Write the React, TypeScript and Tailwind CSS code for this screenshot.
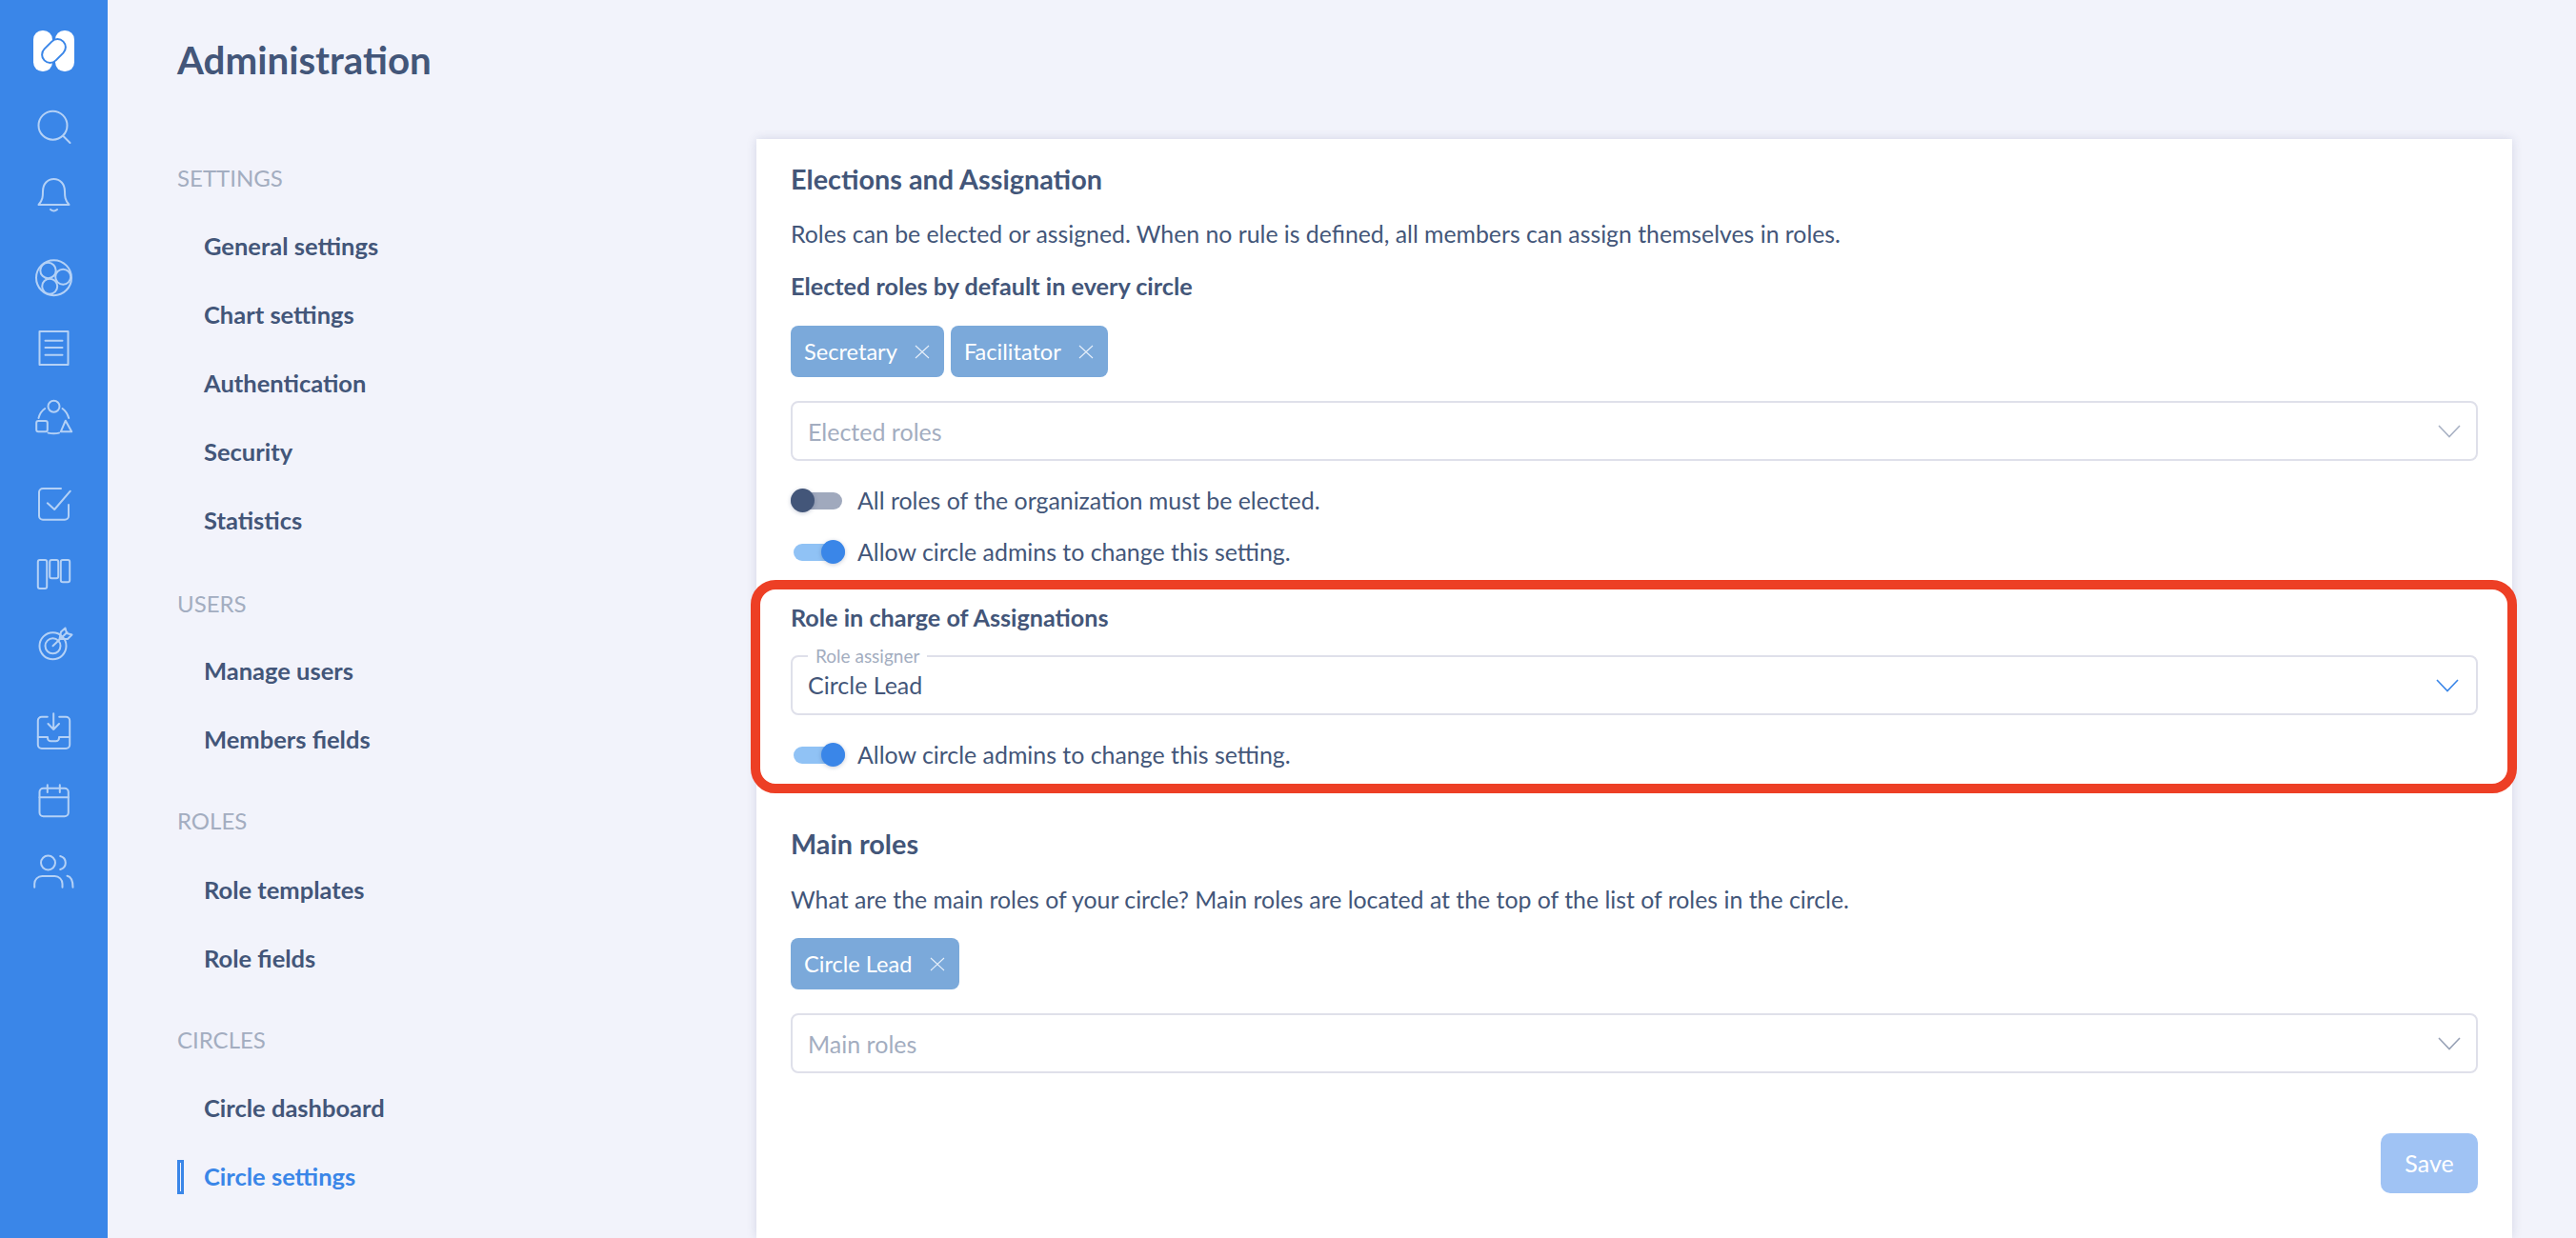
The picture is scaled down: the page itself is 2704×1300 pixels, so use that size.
import type { ReactNode } from "react";

const Icon = ({ children }: { children: ReactNode }) => (
  <svg width="44" height="44" viewBox="0 0 44 44" fill="none" stroke="#b4d1f6" strokeWidth="2" strokeLinecap="round" strokeLinejoin="round">
    {children}
  </svg>
);

const SideSlot = ({ children, className = "" }: { children: ReactNode; className?: string }) => (
  <div className={`h-[73px] flex items-center justify-center ${className}`}>
    <Icon>{children}</Icon>
  </div>
);

const Sidebar = () => (
  <aside className="w-[113px] shrink-0 bg-[#3a86e8] flex flex-col items-stretch">
    <div className="h-[96px] flex items-start justify-center pt-[32px]">
      <svg width="43" height="43" viewBox="0 0 43 43">
        <rect x="0" y="0" width="20" height="43" rx="9.5" fill="#fff" />
        <rect x="23" y="0" width="20" height="43" rx="9.5" fill="#fff" />
        <rect x="7.5" y="13" width="28" height="17" rx="8.5" transform="rotate(-45 21.5 21.5)" fill="#fff" stroke="#3a86e8" strokeWidth="2" />
      </svg>
    </div>
    <SideSlot>
      <circle cx="20.5" cy="20.7" r="15" />
      <path d="M31.5 32L38.5 39" />
    </SideSlot>
    <SideSlot>
      <path d="M5.5 31H37.5C33 26 33 22 33 17C33 9 28 4 21.5 4C15 4 10 9 10 17C10 22 10 26 5.5 31Z" />
      <path d="M18 36Q21.5 39 25 36" />
    </SideSlot>
    <SideSlot className="mt-[13px]">
      <circle cx="21.5" cy="21.7" r="18.5" />
      <circle cx="15.5" cy="14" r="8.2" />
      <circle cx="31.2" cy="20.7" r="8" />
      <circle cx="17.2" cy="30.7" r="8" />
    </SideSlot>
    <SideSlot>
      <rect x="6.5" y="5" width="30" height="35" />
      <path d="M12.5 14.7H30.5M12.5 22H30.5M12.5 29.7H30.5" />
    </SideSlot>
    <SideSlot>
      <circle cx="21.5" cy="10.7" r="6" />
      <rect x="3.2" y="26" width="11.6" height="11.3" rx="2" />
      <path d="M33.8 25.7L40.2 37.3H28.8Z" />
      <path d="M5.5 23C6.5 19 8.5 15.5 12.2 13M30.5 13C34 15.5 36 19 37.2 23M15.5 38.6Q21.5 40 27 38.6" />
    </SideSlot>
    <SideSlot className="mt-[19px]">
      <path d="M29 5H10A4 4 0 0 0 6 9V33.7A4 4 0 0 0 10 37.7H33A4 4 0 0 0 37 33.7V22" />
      <path d="M14.8 20.3L22.2 27L38.8 7.7" />
    </SideSlot>
    <SideSlot>
      <rect x="4.8" y="7" width="9.4" height="30" rx="2" />
      <rect x="17.2" y="7" width="9" height="19.3" rx="2" />
      <rect x="28.8" y="7" width="9.4" height="23.3" rx="2" />
    </SideSlot>
    <SideSlot>
      <circle cx="20.5" cy="24.3" r="14" />
      <circle cx="20.5" cy="24.3" r="8" />
      <path d="M20.5 24.3L35.5 10" />
      <path d="M27.5 17L29 9.5L33.5 5.5L35 11L40.5 12.5L36 17Z" />
    </SideSlot>
    <SideSlot className="mt-[19px]">
      <path d="M14.8 6.7H8.8A4 4 0 0 0 4.8 10.7V36A4 4 0 0 0 8.8 40H34.2A4 4 0 0 0 38.2 36V10.7A4 4 0 0 0 34.2 6.7H27.2" />
      <path d="M21.2 3.3V20M15.5 14L21.2 20L27 14" />
      <path d="M4.8 28H15V29A3.3 3.3 0 0 0 18.3 32.3H23.7A3.3 3.3 0 0 0 27 29V28H38.2" />
    </SideSlot>
    <SideSlot>
      <rect x="6.5" y="8.7" width="30.3" height="29.6" rx="4" />
      <path d="M6.5 18.3H36.8M14.8 5.3V13M27.8 5.3V13" />
    </SideSlot>
    <SideSlot className="pt-[3px]">
      <circle cx="15.5" cy="13" r="7.5" />
      <path d="M1.2 38.7V35A8 8 0 0 1 9.2 27H22.5A8 8 0 0 1 30.5 35V38.7" />
      <path d="M28.2 6Q33.8 7.5 33.8 13Q33.8 18.5 28.2 20" />
      <path d="M35.5 26.7Q41.5 28 41.5 38.7" />
    </SideSlot>
  </aside>
);

const NavGroup = ({ title, items, className = "", listClass = "mt-[35px]", active }: { title: string; items: string[]; className?: string; listClass?: string; active?: string }) => (
  <div className={className}>
    <div className="h-[36px] leading-[36px] text-[24px] text-[#a3adc0]">{title}</div>
    <div className={`flex flex-col ${listClass}`}>
      {items.map((item) => (
        <div key={item} className="relative h-[72px] pl-[28px]">
          {item === active && (
            <span className="absolute left-0 top-[1px] w-[7px] h-[36px] border-[3px] border-[#3a86e8] bg-[#f2f3fb]" />
          )}
          <span className={`block h-[36px] leading-[36px] text-[25.5px] font-bold ${item === active ? "text-[#3a86e8]" : "text-[#435679]"}`}>{item}</span>
        </div>
      ))}
    </div>
  </div>
);

const LeftNav = () => (
  <nav className="w-[608px] shrink-0 pt-[23px] flex flex-col">
    <NavGroup title="SETTINGS" items={["General settings", "Chart settings", "Authentication", "Security", "Statistics"]} />
    <NavGroup className="mt-[16px]" listClass="mt-[34px]" title="USERS" items={["Manage users", "Members fields"]} />
    <NavGroup className="mt-[14px]" listClass="mt-[36px]" title="ROLES" items={["Role templates", "Role fields"]} />
    <NavGroup className="mt-[14px]" title="CIRCLES" items={["Circle dashboard", "Circle settings"]} active="Circle settings" />
  </nav>
);

const Chevron = ({ color, className = "" }: { color: string; className?: string }) => (
  <svg width="24" height="14" viewBox="0 0 24 14" fill="none" className={className}>
    <path d="M1 1L12 12.5L23 1" stroke={color} strokeWidth="1.6" />
  </svg>
);

const Chip = ({ label, className = "" }: { label: string; className?: string }) => (
  <div className={`h-[54px] rounded-[8px] bg-[#7ba9da] pl-[14px] pr-[15px] flex items-center gap-[18px] text-white text-[23.6px] ${className}`}>
    <span className="pt-[1px]">{label}</span>
    <svg width="16" height="15" viewBox="0 0 16 15" fill="none">
      <path d="M1 1L15 14M15 1L1 14" stroke="#e8f0fa" strokeWidth="1.1" />
    </svg>
  </div>
);

const SelectBox = ({ placeholder, chevron }: { placeholder: string; chevron: string }) => (
  <div className="h-[63px] rounded-[8px] border-2 border-[#dfe0ea] pl-[16px] pr-[16px] flex items-center justify-between">
    <span className="pt-[3px] text-[25px] text-[#a3adc0]">{placeholder}</span>
    <Chevron color={chevron} />
  </div>
);

const Toggle = ({ on, label, className = "" }: { on?: boolean; label: string; className?: string }) => (
  <div className={`h-[36px] flex items-center ${className}`}>
    <div className="relative w-[57px] h-[25px] shrink-0 mr-[13px]">
      {on ? (
        <>
          <span className="absolute left-[3px] right-0 top-[4px] h-[18px] rounded-full bg-[#90c2f5]" />
          <span className="absolute right-0 top-0 w-[25px] h-[25px] rounded-full bg-[#3a86e8] shadow-[0_1px_4px_rgba(30,50,100,0.25)]" />
        </>
      ) : (
        <>
          <span className="absolute left-0 right-[3px] top-[4px] h-[18px] rounded-full bg-[#a0a9bd]" />
          <span className="absolute left-0 top-0 w-[25px] h-[25px] rounded-full bg-[#435679] shadow-[0_1px_4px_rgba(30,50,100,0.25)]" />
        </>
      )}
    </div>
    <span className="pt-[1px] text-[24.9px] text-[#435679]">{label}</span>
  </div>
);

const Card = () => (
  <section className="relative w-[1843px] h-[1154px] bg-white shadow-[0_0_10px_rgba(50,60,120,0.16)] pl-[36px] pr-[36px] pt-[24px] text-[#435679]">
    <h2 className="h-[36px] leading-[36px] text-[28.8px] font-bold">Elections and Assignation</h2>
    <p className="mt-[22px] h-[36px] leading-[36px] text-[24.8px]">Roles can be elected or assigned. When no rule is defined, all members can assign themselves in roles.</p>
    <h3 className="mt-[18px] h-[36px] leading-[36px] text-[25.2px] font-bold">Elected roles by default in every circle</h3>
    <div className="mt-[24px] flex gap-[7px]">
      <Chip label="Secretary" />
      <Chip label="Facilitator" />
    </div>
    <div className="mt-[25px]">
      <SelectBox placeholder="Elected roles" chevron="#a9b2c4" />
    </div>
    <Toggle className="mt-[23px]" label="All roles of the organization must be elected." />
    <Toggle className="mt-[18px]" on label="Allow circle admins to change this setting." />

    <h3 className="mt-[33px] h-[36px] leading-[36px] text-[25.2px] font-bold">Role in charge of Assignations</h3>
    <div className="relative mt-[22px] h-[63px] rounded-[8px] border-2 border-[#dfe0ea] pl-[16px] pr-[18px] flex items-center justify-between">
      <span className="absolute left-[16px] -top-[12px] bg-white px-[8px] text-[19px] leading-[22px] text-[#a3adc0]">Role assigner</span>
      <span className="text-[25px] text-[#435679]">Circle Lead</span>
      <Chevron color="#3a86e8" />
    </div>
    <Toggle className="mt-[23px]" on label="Allow circle admins to change this setting." />

    <h2 className="mt-[58px] h-[36px] leading-[36px] text-[28.8px] font-bold">Main roles</h2>
    <p className="mt-[22px] h-[36px] leading-[36px] text-[24.85px]">What are the main roles of your circle? Main roles are located at the top of the list of roles in the circle.</p>
    <div className="mt-[23px] flex">
      <Chip label="Circle Lead" />
    </div>
    <div className="mt-[25px]">
      <SelectBox placeholder="Main roles" chevron="#98a2b6" />
    </div>
    <div className="mt-[63px] flex justify-end">
      <button className="w-[102px] h-[63px] rounded-[10px] bg-[#a0c3f4] text-white text-[25px]">Save</button>
    </div>

    <div className="absolute left-[-6px] top-[463px] w-[1854px] h-[224px] rounded-[26px] border-[10px] border-[#ed3f25] pointer-events-none" />
  </section>
);

export default function App() {
  return (
    <div className="flex h-[1300px] w-[2704px] overflow-hidden bg-[#f2f3fb] [font-family:Lato,sans-serif]">
      <Sidebar />
      <main className="flex-1 pl-[73px]">
        <h1 className="pt-[39px] h-[146px] text-[40.3px] leading-[48px] font-bold text-[#435679]">Administration</h1>
        <div className="flex">
          <LeftNav />
          <Card />
        </div>
      </main>
    </div>
  );
}
